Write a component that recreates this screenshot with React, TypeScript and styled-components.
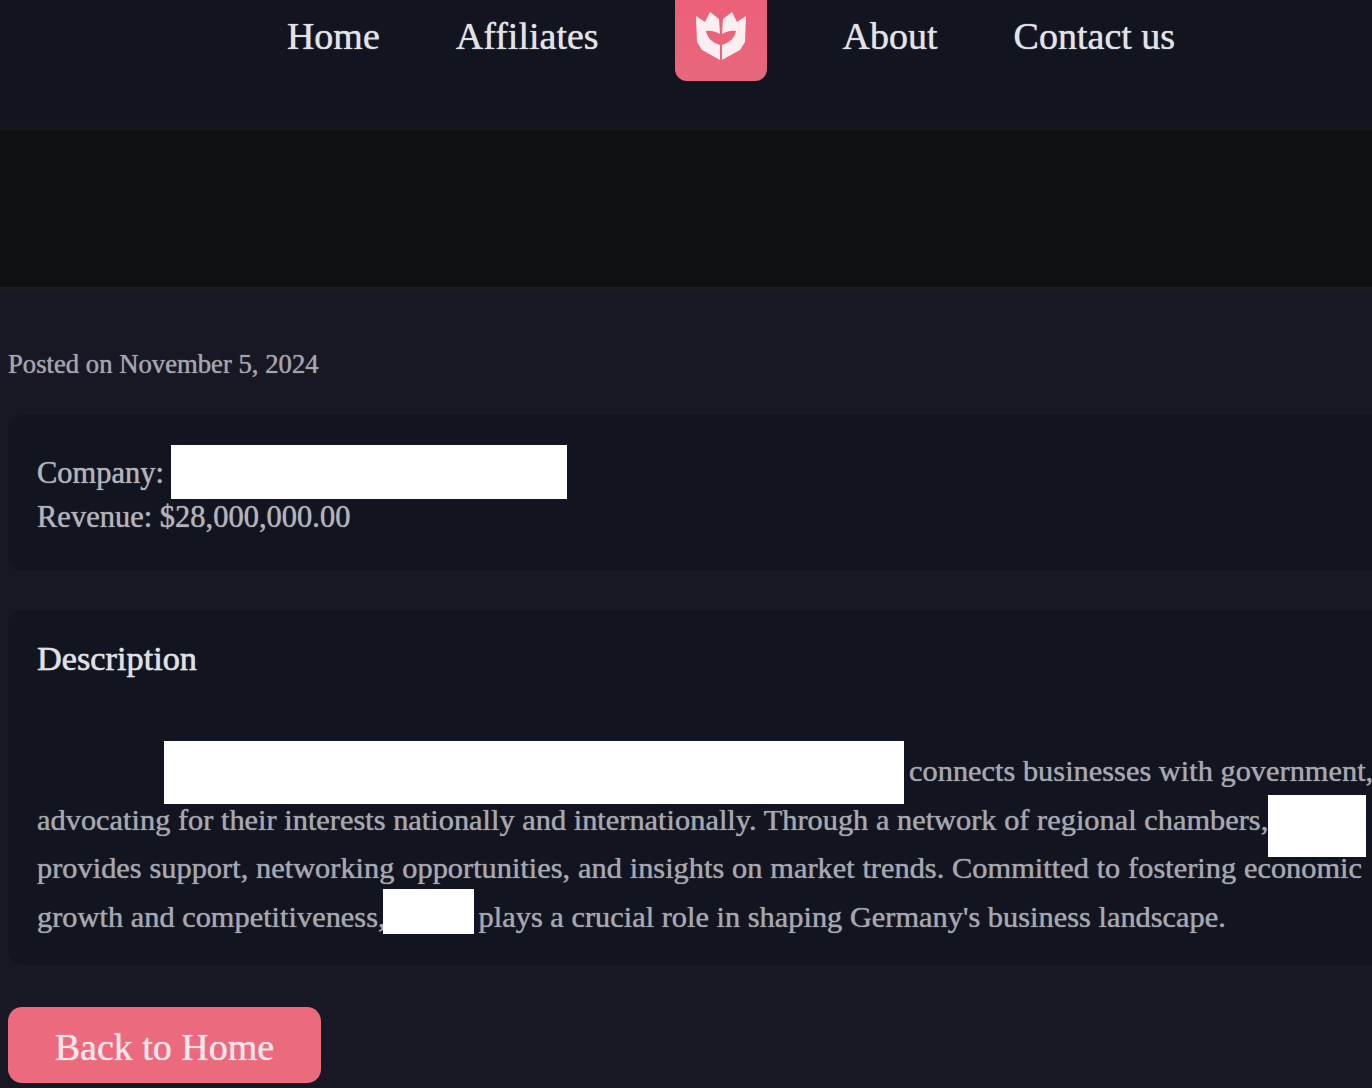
import styled, { createGlobalStyle } from "styled-components";

const GlobalStyle = createGlobalStyle`
  html, body {
    margin: 0;
    height: 1088px;
    overflow: hidden;
    background-color: #171823;
    font-family: "Liberation Serif", "Times New Roman", serif;
  }
`;

const Page = styled.div`
  width: 1372px;
  height: 1088px;
  overflow: hidden;
  text-shadow: 0 0 1px currentColor;
`;

const Header = styled.header`
  height: 126px;
  background-color: #12151f;
  display: flex;
  justify-content: center;
  align-items: flex-start;
  gap: 76px;
  padding-left: 90px;
`;

const NavLink = styled.a`
  font-size: 38px;
  line-height: 73px;
  color: #e2e3e7;
  text-decoration: none;
`;

const LogoTile = styled.div`
  width: 92px;
  height: 81px;
  border-radius: 0 0 12px 12px;
  background: linear-gradient(180deg, #ec6078 0%, #e7677c 100%);
  display: flex;
  justify-content: center;
  align-items: flex-start;
  padding-top: 12px;
  box-sizing: border-box;
`;

const Band = styled.div`
  height: 156px;
  background-color: #101114;
  border-top: 5px solid #15161a;
  border-bottom: 5px solid #1b1c22;
`;

const Main = styled.main`
  padding: 57px 0 0 8px;
`;

const Posted = styled.p`
  margin: 0 0 36px;
  font-size: 26.7px;
  line-height: 30px;
  color: #a3a5ad;
`;

const Card = styled.section`
  background-color: #12141f;
  border-radius: 14px 0 0 14px;
  padding: 0 0 0 29px;
  white-space: nowrap;
  box-sizing: border-box;
`;

const InfoCard = styled(Card)`
  height: 155px;
  padding-top: 36px;
  margin-bottom: 40px;
`;

const DescriptionCard = styled(Card)`
  height: 355px;
  padding-top: 29px;
  margin-bottom: 42px;
`;

const InfoLine = styled.div`
  font-size: 30.5px;
  line-height: 44px;
  color: #b2b4bb;
`;

const Heading = styled.h2`
  margin: 0 0 70px;
  font-size: 34.3px;
  line-height: 38px;
  font-weight: 400;
  color: #dfe0e4;
  -webkit-text-stroke: 0.3px #dfe0e4;
`;

const Body = styled.p`
  margin: 0;
  font-size: 30.4px;
  line-height: 48.6px;
  color: #a6a8b0;
  text-indent: 127px;
`;

const SpacedLine = styled.span`
  word-spacing: 0.2px;
`;

// white bar laid over the line, measured from its baseline
const Redacted = styled.span<{ $w: number; $h: number; $rise: number; $gap?: number; $pull?: number }>`
  display: inline-block;
  position: relative;
  width: ${(p) => p.$w}px;
  height: 0;
  margin-left: ${(p) => -(p.$pull ?? 0)}px;
  margin-right: ${(p) => p.$gap ?? 0}px;
  text-indent: 0;

  &::before {
    content: "";
    position: absolute;
    left: 0;
    right: 0;
    top: ${(p) => -p.$rise}px;
    height: ${(p) => p.$h}px;
    background-color: #fff;
  }
`;

const BackButton = styled.a`
  display: inline-flex;
  align-items: center;
  justify-content: center;
  width: 313px;
  height: 76px;
  padding-top: 4px;
  box-sizing: border-box;
  border-radius: 14px;
  background-color: #ec6a7d;
  color: #f7e6e9;
  font-size: 38px;
  text-decoration: none;
`;

function LogoMark() {
  return (
    <svg width="50" height="48" viewBox="0 0 50 48" fill="#fbeef0">
      <path d="M0 4 L9 10 L14 0 L23 7 L24 22 C20 20 16 18 10 19 C11 26 17 31 24 33 L24 48 L6 38 L1 30 Z" />
      <path d="M50 4 L41 10 L36 0 L27 7 L26 22 C30 20 34 18 40 19 C39 26 33 31 26 33 L26 48 L44 38 L49 30 Z" />
    </svg>
  );
}

export default function App() {
  return (
    <Page>
      <GlobalStyle />
      <Header>
        <NavLink>Home</NavLink>
        <NavLink>Affiliates</NavLink>
        <LogoTile>
          <LogoMark />
        </LogoTile>
        <NavLink>About</NavLink>
        <NavLink>Contact us</NavLink>
      </Header>
      <Band />
      <Main>
        <Posted>Posted on November 5, 2024</Posted>
        <InfoCard>
          <InfoLine>
            Company: <Redacted $w={396} $h={54} $rise={38} $pull={1} />
          </InfoLine>
          <InfoLine>Revenue: $28,000,000.00</InfoLine>
        </InfoCard>
        <DescriptionCard>
          <Heading>Description</Heading>
          <Body>
            <Redacted $w={740} $h={63} $rise={40} $gap={5} />
            connects businesses with government,
            <br />
            advocating for their interests nationally and internationally. Through a network of regional chambers,
            <Redacted $w={98} $h={62} $rise={35} />
            <br />
            <SpacedLine>
              provides support, networking opportunities, and insights on market trends. Committed to fostering economic
            </SpacedLine>
            <br />
            growth and competitiveness,
            <Redacted $w={91} $h={45} $rise={38} $gap={5} $pull={3} />
            plays a crucial role in shaping Germany's business landscape.
          </Body>
        </DescriptionCard>
        <BackButton>Back to Home</BackButton>
      </Main>
    </Page>
  );
}
